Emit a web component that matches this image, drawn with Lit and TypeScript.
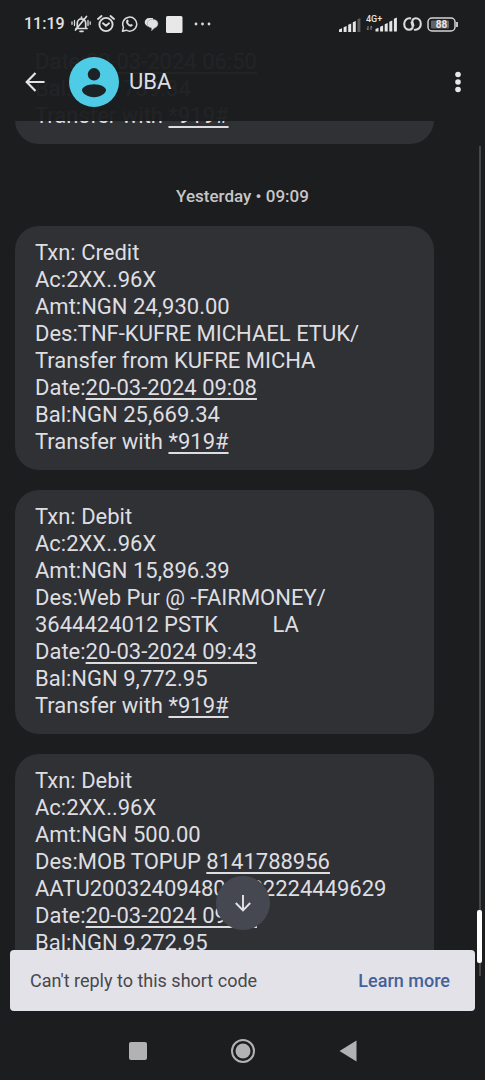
import { LitElement, html, css, svg } from "lit";
import { customElement, property } from "lit/decorators.js";

type Part = string | { link: string };
type Message = Part[][];

const earlier: Message = [
  ["Date:", { link: "20-03-2024 06:50" }],
  ["Bal:NGN 739.34"],
  ["Transfer with ", { link: "*919#" }],
];

const recent: Message[] = [
  [
    ["Txn: Credit"],
    ["Ac:2XX..96X"],
    ["Amt:NGN 24,930.00"],
    ["Des:TNF-KUFRE MICHAEL ETUK/"],
    ["Transfer from KUFRE MICHA"],
    ["Date:", { link: "20-03-2024 09:08" }],
    ["Bal:NGN 25,669.34"],
    ["Transfer with ", { link: "*919#" }],
  ],
  [
    ["Txn: Debit"],
    ["Ac:2XX..96X"],
    ["Amt:NGN 15,896.39"],
    ["Des:Web Pur @ -FAIRMONEY/"],
    ["3644424012 PSTK          LA"],
    ["Date:", { link: "20-03-2024 09:43" }],
    ["Bal:NGN 9,772.95"],
    ["Transfer with ", { link: "*919#" }],
  ],
  [
    ["Txn: Debit"],
    ["Ac:2XX..96X"],
    ["Amt:NGN 500.00"],
    ["Des:MOB TOPUP ", { link: "8141788956" }],
    ["AATU200324094800022224449629"],
    ["Date:", { link: "20-03-2024 09:53" }],
    ["Bal:NGN 9,272.95"],
    ["Transfer with ", { link: "*919#" }],
  ],
];

@customElement("message-bubble")
export class MessageBubble extends LitElement {
  @property({ attribute: false }) lines: Message = [];

  static styles = css`
    :host {
      display: block;
      flex: none;
      margin: 0 51px 0 15px;
      padding: 13px 20px 15px;
      border-radius: 24px;
      background: #303135;
      color: #dedee1;
      font-size: 22px;
      line-height: 27px;
    }
    .line {
      white-space: pre;
    }
    .link {
      color: inherit;
      text-decoration: underline 2px;
      text-underline-offset: 3px;
      text-decoration-skip-ink: none;
    }
  `;

  render() {
    return this.lines.map(
      (line) =>
        html`<div class="line">${line.map((p) =>
          typeof p === "string" ? p : html`<a class="link" href="#">${p.link}</a>`
        )}</div>`
    );
  }
}

const bars = (last: string) => svg`
  <path d="M0 14V11.500l3-1.200V14z M4.600 14V9.200l3-1.200v6z M9.200 14V6.800l3-1.200V14z M13.800 14V4.200l3-1.200v11z" fill="#e6e6e6"/>
  <path d="M18.400 14V1.200l3-1.200v14z" fill=${last}/>`;

@customElement("status-bar")
export class StatusBar extends LitElement {
  static styles = css`
    :host {
      display: flex;
      align-items: center;
      justify-content: space-between;
      height: 48px;
      padding: 0 26px 0 24px;
      color: #e2e2e2;
      font-size: 16px;
      line-height: 20px;
    }
    .group {
      display: flex;
      align-items: center;
      gap: 6px;
    }
    .right {
      gap: 5px;
    }
    .time {
      font-weight: 500;
    }
    svg {
      display: block;
    }
    .g {
      font-size: 9px;
      font-weight: 500;
      fill: #e2e2e2;
    }
    .pct {
      font-size: 10px;
      font-weight: 700;
      fill: #e8e8e8;
    }
  `;

  render() {
    return html`
      <div class="group">
        <span class="time">11:19</span>
        <svg width="20" height="18" viewBox="0 0 20 18" fill="none" stroke="#dcdcdc" stroke-width="1.700" stroke-linecap="round">
          <path d="M5 13.500h11M6.300 13V8a4.200 4.200 0 0 1 8.400 0v5M10.500 3.500V2M9 16.300h3"/>
          <path d="M15.500 1.500L4.500 15"/>
          <path d="M3.500 5.500v5M1 6.800v2.500M17 5.500v5M19.200 6.800v2.500" stroke-width="1.300"/>
        </svg>
        <svg width="18" height="18" viewBox="0 0 18 18" fill="none" stroke="#dcdcdc" stroke-width="1.900" stroke-linecap="round">
          <circle cx="9" cy="9.500" r="6.600"/>
          <path d="M1 4l3.500-3M17 4l-3.500-3M6 8.300l3 2.400 3-2.400"/>
        </svg>
        <svg width="17" height="18" viewBox="0 0 17 18">
          <path d="M1.500 16.300l1-4A7 7 0 1 1 5.300 15.200z" fill="none" stroke="#dcdcdc" stroke-width="1.500" stroke-linejoin="round"/>
          <path d="M5.500 5.200c1-1.200 1.700-.6 2.200 1.200-.8 1-.8 1 .1 2.100s1.400 1.200 2.300.4c2 .9 2.100 1.300 1.100 2.200-1.600 1.200-3.300.2-4.700-1.300S4.500 6.500 5.500 5.200z" fill="#dcdcdc"/>
        </svg>
        <svg width="15" height="16" viewBox="0 0 15 16">
          <path d="M1.500 8.500C0 7 .5 2.500 5 2h4v7l-5.500 1.500z" fill="#e2e2e2"/>
          <path d="M8.500 3.300c3.200 0 5.500 1.800 5.500 4.400 0 2-1.200 3.400-3 4L7.500 14.800v-2.900C5 11.500 3.300 10 3.300 7.700c0-2.600 2.200-4.400 5.200-4.400z" fill="#e2e2e2" stroke="#8a8a8a" stroke-width=".5"/>
        </svg>
        <svg width="18" height="17" viewBox="0 0 18 17"><rect x="1" width="16.500" height="17" rx="1.500" fill="#e8e8e8"/></svg>
        <svg width="28" height="4" viewBox="0 0 28 4" fill="#dcdcdc">
          <circle cx="7" cy="2" r="1.400"/><circle cx="13.500" cy="2" r="1.400"/><circle cx="20" cy="2" r="1.400"/>
        </svg>
      </div>
      <div class="group right">
        <svg width="22" height="16" viewBox="0 0 22 16"><g transform="translate(0 2)">${bars("#5a5b5d")}</g></svg>
        <svg width="32" height="18" viewBox="0 0 32 18">
          <path d="M2 11v4M1 13.500l1 1.500M5 15v-4M6 12.500L5 11" stroke="#8a8a8a" fill="none"/>
          <g transform="translate(9.500 2.500)">${bars("#e6e6e6")}</g>
          <text class="g" x="0" y="7">4G+</text>
        </svg>
        <svg width="19" height="14" viewBox="0 0 19 14" fill="none" stroke="#dcdcdc" stroke-width="2.100" stroke-linecap="round">
          <path d="M7.200 1.300C3.800.8 1.200 3.500 1.200 7s2.400 5.700 5 5.700c2.500 0 4-1.700 3.300-4.200L8.600 5.500"/>
          <path d="M11.800 12.700c3.400.5 6-2.200 6-5.700s-2.400-5.700-5-5.700c-2.500 0-4 1.700-3.300 4.200l.9 3"/>
        </svg>
        <svg width="32" height="15" viewBox="0 0 32 15">
          <rect x="1" y="1" width="27" height="13" rx="4" fill="none" stroke="#d4d4d4" stroke-width="1.500"/>
          <rect x="4" y="3.500" width="18" height="8" rx="1" fill="#626365"/>
          <path d="M30 5v5" stroke="#d4d4d4" stroke-width="1.800"/>
          <text class="pct" x="14.500" y="11" text-anchor="middle">88</text>
        </svg>
      </div>
    `;
  }
}

@customElement("app-root")
export class AppRoot extends LitElement {
  static styles = css`
    :host {
      display: grid;
      grid-template-columns: minmax(0, 1fr);
      grid-template-rows: auto auto minmax(0, 1fr) auto;
      height: 100vh;
      overflow: hidden;
      background: #1c1d1f;
      font-family: Roboto, sans-serif;
    }
    .bar {
      grid-area: 2 / 1;
      z-index: 1;
      display: flex;
      align-items: center;
      height: 73px;
      padding: 0 14px 6px 20px;
      box-sizing: border-box;
      background: rgba(28, 29, 31, 0.97);
    }
    button {
      display: grid;
      place-items: center;
      padding: 0;
      border: 0;
      background: none;
      cursor: pointer;
    }
    svg {
      display: block;
    }
    .back {
      width: 30px;
      height: 40px;
    }
    .avatar {
      margin: 0 10px 0 19px;
    }
    .title {
      flex: 1;
      margin: 0;
      color: #dedee1;
      font-size: 22px;
      line-height: 27px;
      font-weight: 400;
    }
    .more {
      width: 26px;
      height: 40px;
    }
    .thread {
      grid-area: 2 / 1 / 4 / 2;
      display: flex;
      flex-direction: column;
      justify-content: flex-end;
      gap: 20px;
      min-height: 0;
      padding-bottom: 23px;
      overflow: hidden;
    }
    .stamp {
      flex: none;
      padding-top: 22px;
      color: #c6c6c9;
      font-size: 17px;
      line-height: 20px;
      font-weight: 500;
      text-align: center;
    }
    .overlay {
      grid-area: 3 / 1;
      align-self: end;
      z-index: 2;
      display: flex;
      flex-direction: column;
      align-items: center;
      gap: 20px;
      padding: 0 10px 10px;
    }
    .jump {
      width: 54px;
      height: 54px;
      border-radius: 50%;
      background: #454850;
    }
    .snack {
      display: flex;
      align-items: center;
      justify-content: space-between;
      align-self: stretch;
      height: 61px;
      padding: 0 25px 0 20px;
      box-sizing: border-box;
      border-radius: 4px;
      background: #e3e2e8;
      color: #48484c;
      font-size: 18px;
      line-height: 24px;
    }
    .learn {
      color: #45619b;
      font-weight: 500;
      text-decoration: none;
    }
    .track {
      grid-area: 3 / 1;
      justify-self: end;
      position: relative;
      z-index: 1;
      width: 2px;
      margin: 25px 4px 45px 0;
      background: #454648;
    }
    .thumb {
      position: absolute;
      right: -1px;
      bottom: 13px;
      width: 5px;
      height: 53px;
      border-radius: 2px;
      background: #fff;
    }
    .nav {
      grid-area: 4 / 1;
      display: flex;
      align-items: center;
      justify-content: center;
      gap: 81px;
      height: 59px;
    }
    .nav button {
      width: 24px;
      height: 24px;
    }
  `;

  render() {
    return html`
      <status-bar></status-bar>
      <header class="bar">
        <button class="back" aria-label="Back">
          <svg width="20" height="20" viewBox="0 0 20 20" fill="none" stroke="#e4e4e6" stroke-width="2.200"><path d="M19.500 10H2M10.500 1L1.700 10l8.800 9"/></svg>
        </button>
        <svg class="avatar" width="50" height="50" viewBox="0 0 50 50">
          <circle cx="25" cy="25" r="25" fill="#4ecce6"/>
          <circle cx="25" cy="17.300" r="6.200" fill="#1c2327"/>
          <path d="M13 33c0-3 5.500-5.800 12-5.800s12 2.800 12 5.800c0 3.400-5.500 7.200-12 7.200s-12-3.800-12-7.200z" fill="#1c2327"/>
        </svg>
        <h1 class="title">UBA</h1>
        <button class="more" aria-label="More options">
          <svg width="6" height="22" viewBox="0 0 6 22" fill="#e8e8ea"><circle cx="3" cy="3.500" r="2.800"/><circle cx="3" cy="11" r="2.800"/><circle cx="3" cy="18.500" r="2.800"/></svg>
        </button>
      </header>
      <main class="thread">
        <message-bubble .lines=${earlier}></message-bubble>
        <div class="stamp">Yesterday • 09:09</div>
        ${recent.map((m) => html`<message-bubble .lines=${m}></message-bubble>`)}
      </main>
      <div class="track"><div class="thumb"></div></div>
      <div class="overlay">
        <button class="jump" aria-label="Scroll to latest">
          <svg width="18" height="18" viewBox="0 0 18 18" fill="none" stroke="#e4e4e6" stroke-width="1.900"><path d="M9 1v15M1.800 9L9 16.300 16.200 9"/></svg>
        </button>
        <div class="snack">
          <span>Can't reply to this short code</span>
          <a class="learn" href="#">Learn more</a>
        </div>
      </div>
      <nav class="nav">
        <button aria-label="Recent apps"><svg width="18" height="18"><rect width="18" height="18" rx="2" fill="#b2b2b4"/></svg></button>
        <button aria-label="Home"><svg width="24" height="24"><circle cx="12" cy="12" r="11" fill="none" stroke="#b2b2b4" stroke-width="2"/><circle cx="12" cy="12" r="7.500" fill="#b2b2b4"/></svg></button>
        <button aria-label="Go back"><svg width="18" height="22"><path d="M0.500 11L17.500 0.500v21z" fill="#b2b2b4"/></svg></button>
      </nav>
    `;
  }
}
